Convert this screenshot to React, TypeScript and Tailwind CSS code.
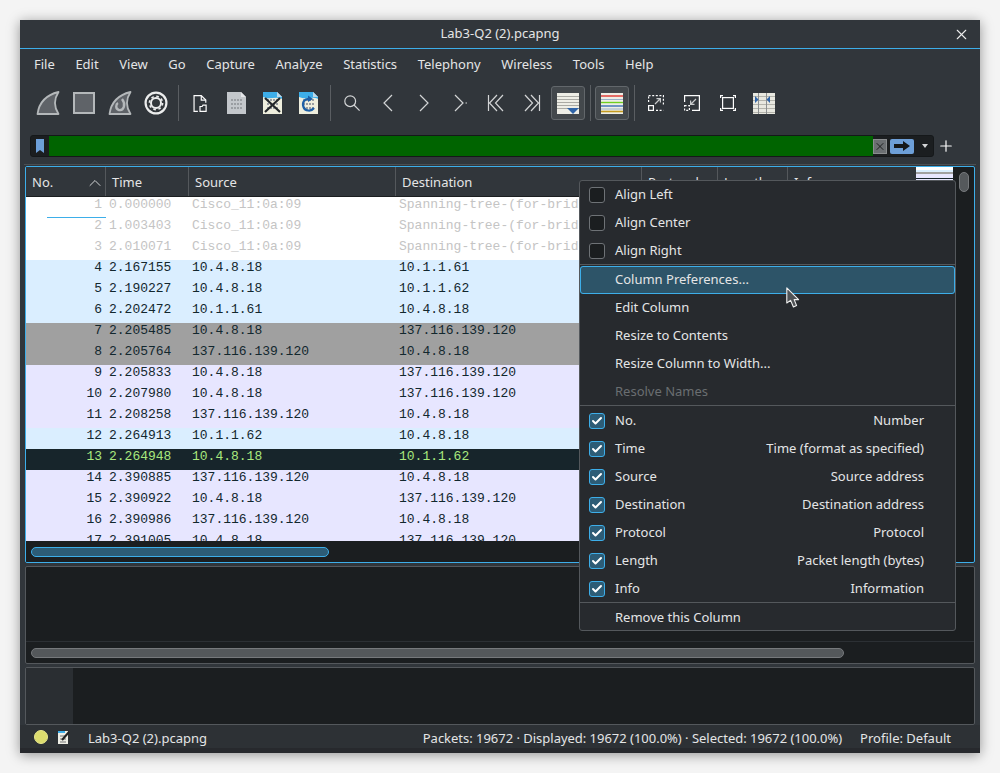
import { Check, ChevronUp, Plus, X } from 'lucide-react';

const menuNames = ['File', 'Edit', 'View', 'Go', 'Capture', 'Analyze', 'Statistics', 'Telephony', 'Wireless', 'Tools', 'Help'];

type Row = { no: number; time: string; src: string; dst: string; kind: 'stp' | 'blue' | 'gray' | 'lav' | 'sel' };

const stp = 'Spanning-tree-(for-bridges)_00';
const rows: Row[] = [
  { no: 1, time: '0.000000', src: 'Cisco_11:0a:09', dst: stp, kind: 'stp' },
  { no: 2, time: '1.003403', src: 'Cisco_11:0a:09', dst: stp, kind: 'stp' },
  { no: 3, time: '2.010071', src: 'Cisco_11:0a:09', dst: stp, kind: 'stp' },
  { no: 4, time: '2.167155', src: '10.4.8.18', dst: '10.1.1.61', kind: 'blue' },
  { no: 5, time: '2.190227', src: '10.4.8.18', dst: '10.1.1.62', kind: 'blue' },
  { no: 6, time: '2.202472', src: '10.1.1.61', dst: '10.4.8.18', kind: 'blue' },
  { no: 7, time: '2.205485', src: '10.4.8.18', dst: '137.116.139.120', kind: 'gray' },
  { no: 8, time: '2.205764', src: '137.116.139.120', dst: '10.4.8.18', kind: 'gray' },
  { no: 9, time: '2.205833', src: '10.4.8.18', dst: '137.116.139.120', kind: 'lav' },
  { no: 10, time: '2.207980', src: '10.4.8.18', dst: '137.116.139.120', kind: 'lav' },
  { no: 11, time: '2.208258', src: '137.116.139.120', dst: '10.4.8.18', kind: 'lav' },
  { no: 12, time: '2.264913', src: '10.1.1.62', dst: '10.4.8.18', kind: 'blue' },
  { no: 13, time: '2.264948', src: '10.4.8.18', dst: '10.1.1.62', kind: 'sel' },
  { no: 14, time: '2.390885', src: '137.116.139.120', dst: '10.4.8.18', kind: 'lav' },
  { no: 15, time: '2.390922', src: '10.4.8.18', dst: '137.116.139.120', kind: 'lav' },
  { no: 16, time: '2.390986', src: '137.116.139.120', dst: '10.4.8.18', kind: 'lav' },
  { no: 17, time: '2.391005', src: '10.4.8.18', dst: '137.116.139.120', kind: 'lav' },
];

const rowClass = {
  stp: 'bg-white text-[#c4c4c4]',
  blue: 'bg-[#daeeff] text-[#12272e]',
  gray: 'bg-[#a0a0a0] text-[#12272e]',
  lav: 'bg-[#e7e6ff] text-[#12272e]',
  sel: 'bg-[#17252b] text-[#a9e87e]',
};

const columnItems = [
  ['No.', 'Number'],
  ['Time', 'Time (format as specified)'],
  ['Source', 'Source address'],
  ['Destination', 'Destination address'],
  ['Protocol', 'Protocol'],
  ['Length', 'Packet length (bytes)'],
  ['Info', 'Information'],
];

const FinStart = () => (
  <svg width="24" height="24" viewBox="0 0 24 24">
    <path d="M1.5 23 C3 12 10 4 22.5 1 C18 8 18 16 22.5 23 Z" fill="#5f6368" stroke="#b4b8ba" strokeWidth="1.8" strokeLinejoin="round" />
  </svg>
);

const StopIcon = () => <div className="w-[22px] h-[22px] bg-[#5f6368] border-2 border-[#b4b8ba]" />;

const FinRestart = () => (
  <svg width="24" height="24" viewBox="0 0 24 24">
    <path d="M1.5 23 C3 12 10 4 22.5 1 C18 8 18 16 22.5 23 Z" fill="#5f6368" stroke="#b4b8ba" strokeWidth="1.8" strokeLinejoin="round" />
    <path d="M14 8 C18 13 16 20 11 19 C7 18 8 13 10 12" fill="none" stroke="#b4b8ba" strokeWidth="2.4" />
  </svg>
);

const GearIcon = () => (
  <svg width="24" height="24" viewBox="0 0 24 24">
    <circle cx="12" cy="12" r="10.4" fill="#33383c" stroke="#eceded" strokeWidth="2.2" />
    <circle cx="12" cy="12" r="5" fill="none" stroke="#eceded" strokeWidth="2" />
    <circle cx="12" cy="12" r="6.6" fill="none" stroke="#eceded" strokeWidth="1.6" strokeDasharray="2.6 2.6" />
  </svg>
);

const OpenIcon = () => (
  <svg width="14" height="17" viewBox="0 0 16 20" fill="none" stroke="#fcfcfc" strokeWidth="1.4">
    <path d="M5.5 19.2 H1 V.8 H9.5 L14.8 6 V9" />
    <path d="M9.5 .8 V6 H14.8" />
    <path d="M8 19.2 V13.5 H10.5 L11.5 12 H15.2 V19.2 Z" />
  </svg>
);

// little binary-file sheet, the three file icons share it
const FileSheet = ({ blue }: { blue?: boolean }) => (
  <>
    <path d="M1 1 H15 L20 6 V23 H1 Z" fill={blue ? '#eeeedd' : '#c3c7cb'} />
    {blue && <path d="M1 1 H15 L20 6 V8 C14 5 8 9 1 6 Z" fill="#3daee9" />}
    <path d="M15 1 V6 H20 Z" fill={blue ? '#bcd9ea' : '#e4e6e8'} />
    <path d="M5 9 H16 M5 13 H16 M5 17 H16" stroke="#9a9ea2" strokeWidth="2" strokeDasharray="2 1" fill="none" />
  </>
);

const FileIcon = () => (
  <svg width="21" height="24" viewBox="0 0 21 24">
    <FileSheet />
  </svg>
);

const CloseFileIcon = () => (
  <svg width="21" height="24" viewBox="0 0 21 24">
    <FileSheet blue />
    <path d="M3 7 L18 21 M18 7 L3 21" stroke="#23272a" strokeWidth="2.2" />
  </svg>
);

const ReloadFileIcon = () => (
  <svg width="21" height="24" viewBox="0 0 21 24">
    <FileSheet blue />
    <path d="M12 8 C6 7 4 12 5.5 16 C7 20 13 21 16 17" fill="none" stroke="#1d5fa6" strokeWidth="2.2" />
    <path d="M10 4.5 L15 8 L10 11 Z" fill="#1d5fa6" />
  </svg>
);

const LineIcon = ({ d }: { d: string }) => (
  <svg width="22" height="22" viewBox="0 0 22 22" fill="none" stroke="#d3d5d6" strokeWidth="1.2">
    <path d={d} />
  </svg>
);

const SearchIcon = () => (
  <svg width="16" height="16" viewBox="0 0 16 16" fill="none" stroke="#d3d5d6" strokeWidth="1.2">
    <circle cx="6.2" cy="6.2" r="5.4" />
    <path d="M10 10 L15.6 15.6" />
  </svg>
);

const AutoScrollIcon = () => (
  <svg width="22" height="21" viewBox="0 0 22 21">
    <rect width="22" height="21" fill="#eeeee6" />
    <path d="M0 3.5 H22 M0 6.5 H22 M0 9.5 H22 M0 12.5 H22 M0 15.5 H22" stroke="#aaaaa4" />
    <path d="M10 15 H22 L16 21 Z" fill="#2f64a8" />
  </svg>
);

const ColorizeIcon = () => (
  <svg width="22" height="21" viewBox="0 0 22 21">
    <rect width="22" height="21" fill="#eeeee6" />
    <path d="M0 3 H22" stroke="#e0342f" strokeWidth="1.4" />
    <path d="M0 6.5 H22" stroke="#9ab0c8" />
    <path d="M0 9.5 H22" stroke="#6fcf20" strokeWidth="1.4" />
    <path d="M0 13 H22" stroke="#3b6fb5" strokeWidth="1.4" />
    <path d="M0 16 H22" stroke="#9ab0c8" />
    <path d="M0 18.5 H22" stroke="#c49a1f" strokeWidth="1.6" />
  </svg>
);

const ZoomInIcon = () => (
  <svg width="16" height="16" viewBox="0 0 16 16" fill="none" stroke="#fcfcfc" strokeWidth="1.2">
    <path d="M.6 7 V1 M.6 .6 H15.4 V11" strokeDasharray="2 1.6" />
    <rect x=".6" y="10.6" width="4.8" height="4.8" />
    <path d="M7 9 L12 4 M8.5 3.6 H12.4 V7.5" stroke="#c9cbcc" />
    <path d="M8 15.4 H15.4" strokeDasharray="2 1.6" />
  </svg>
);

const ZoomOutIcon = () => (
  <svg width="16" height="16" viewBox="0 0 16 16" fill="none" stroke="#fcfcfc" strokeWidth="1.2">
    <path d="M.6 7 V.6 H15.4 V15.4 H8" />
    <path d="M.6 10.6 H5.4 V15.4 H.6 Z" strokeDasharray="2 1.6" />
    <path d="M12 4 L7 9 M10.5 9.4 H6.6 V5.5" stroke="#c9cbcc" />
  </svg>
);

const NormalSizeIcon = () => (
  <svg width="16" height="16" viewBox="0 0 16 16" fill="none" stroke="#fcfcfc" strokeWidth="1.2">
    <rect x="2.6" y="2.6" width="10.8" height="10.8" />
    <path d="M.6 3 V.6 H3 M13 .6 H15.4 V3 M15.4 13 V15.4 H13 M3 15.4 H.6 V13" />
  </svg>
);

const ResizeColsIcon = () => (
  <svg width="22" height="21" viewBox="0 0 22 21">
    <rect width="22" height="21" fill="#e8e8e0" />
    <path d="M0 3.5 H22 M0 7.5 H22 M0 11.5 H22 M0 15.5 H22 M0 19.5 H22" stroke="#b4b4ac" />
    <path d="M5.5 0 V21 M13.5 0 V21" stroke="#8c8f90" />
    <path d="M2 3 L5.5 6.5 L2 10 Z M17 3 L13.5 6.5 L17 10 Z" fill="#2f64a8" />
  </svg>
);

const Sep = () => <div className="w-px h-9 bg-[#5a5e62] ml-[5px] mr-[4px]" />;

const Tool = ({ children, on }: { children: React.ReactNode; on?: boolean }) => (
  <div className={`w-[34px] h-[34px] shrink-0 flex items-center justify-center ${on ? 'bg-[#43484c] border border-[#62676b] rounded-[3px]' : ''}`}>
    {children}
  </div>
);

const Box = ({ checked }: { checked?: boolean }) =>
  checked ? (
    <div className="w-4 h-4 rounded-[3px] border border-[#3daee9] bg-[#2d5c76] flex items-center justify-center">
      <Check size={12} strokeWidth={4} className="text-white" />
    </div>
  ) : (
    <div className="w-4 h-4 rounded-[3px] border border-[#6e7276] bg-[#1b1e20]" />
  );

const MenuRow = ({ left, right, box, dim, active }: { left: string; right?: string; box?: 'on' | 'off'; dim?: boolean; active?: boolean }) => (
  <div className={`h-7 flex items-center rounded-[3px] ${active ? 'bg-[#2d5468] outline outline-1 -outline-offset-1 outline-[#3daee9]' : ''} ${dim ? 'text-[#6a6e71]' : 'text-[#e4e5e6]'}`}>
    <div className="w-[35px] pl-[9px] flex items-center shrink-0">{box && <Box checked={box === 'on'} />}</div>
    <span className="flex-1">{left}</span>
    {right && <span className="pr-[31px]">{right}</span>}
  </div>
);

const MenuSep = () => <div className="h-px -mt-px mb-px bg-[#54585c]" />;

const ContextMenu = () => (
  <div className="absolute left-[579px] top-[180px] w-[377px] h-[451px] bg-[#272a2e] border border-[#54585c] rounded-[3px] text-[13px]">
    <MenuRow left="Align Left" box="off" />
    <MenuRow left="Align Center" box="off" />
    <MenuRow left="Align Right" box="off" />
    <MenuSep />
    <MenuRow left="Column Preferences..." active />
    <MenuRow left="Edit Column" />
    <MenuRow left="Resize to Contents" />
    <MenuRow left="Resize Column to Width..." />
    <MenuRow left="Resolve Names" dim />
    <MenuSep />
    {columnItems.map(([name, desc]) => (
      <MenuRow key={name} left={name} right={desc} box="on" />
    ))}
    <MenuSep />
    <MenuRow left="Remove this Column" />
  </div>
);

const Cursor = () => (
  <svg className="absolute left-[786px] top-[287px]" width="14" height="21" viewBox="0 0 14 21">
    <path d="M.8 .8 V16 L4.6 13.4 L7.4 20 L10.6 18.6 L8.2 12.6 H12.6 Z" fill="#505356" stroke="#f0f0f0" strokeWidth="1.1" strokeLinejoin="round" />
  </svg>
);

const HeadCell = ({ w, label, children }: { w: string; label: string; children?: React.ReactNode }) => (
  <div className={`${w} h-full shrink-0 flex items-center justify-between pl-[6px] pt-[2px] border-r border-[#54585c]`}>
    <span>{label}</span>
    {children}
  </div>
);

export default function App() {
  return (
    <div className="w-[1000px] h-[773px] bg-[#f4f4f4] p-5 relative font-['Noto_Sans',sans-serif] text-[13px] text-[#e4e5e6] overflow-hidden">
      <div className="w-[960px] h-[733px] bg-[#31363b] shadow-[0_2px_12px_rgba(0,0,0,0.4)] flex flex-col">
        {/* title bar */}
        <div className="h-[29px] shrink-0 border-b border-[#3daee9] flex items-center justify-center relative">
          <span>Lab3-Q2 (2).pcapng</span>
          <X size={17} strokeWidth={1.5} className="absolute right-[10px] top-[6px] text-[#eceded]" />
        </div>

        {/* menu bar */}
        <div className="h-[29px] shrink-0 flex items-center pl-[14px] pt-[2px] gap-[20.6px]">
          {menuNames.map((m) => (
            <span key={m}>{m}</span>
          ))}
        </div>

        {/* main toolbar */}
        <div className="h-[50px] shrink-0 flex items-center pl-[11px]">
          <div className="flex items-center gap-[2px]">
            <Tool><FinStart /></Tool>
            <Tool><StopIcon /></Tool>
            <Tool><FinRestart /></Tool>
            <Tool><GearIcon /></Tool>
          </div>
          <Sep />
          <div className="flex items-center gap-[2px]">
            <Tool><OpenIcon /></Tool>
            <Tool><FileIcon /></Tool>
            <Tool><CloseFileIcon /></Tool>
            <Tool><ReloadFileIcon /></Tool>
          </div>
          <Sep />
          <div className="flex items-center gap-[2px]">
            <Tool><SearchIcon /></Tool>
            <Tool><LineIcon d="M15 3 L7 11 L15 19" /></Tool>
            <Tool><LineIcon d="M7 3 L15 11 L7 19" /></Tool>
            <Tool><LineIcon d="M6 3 L14 11 L6 19 M16.5 11 H18" /></Tool>
            <Tool><LineIcon d="M3.5 3 V19 M12 3 L4.5 11 L12 19 M18 3 L10.5 11 L18 19" /></Tool>
            <Tool><LineIcon d="M18.5 3 V19 M10 3 L17.5 11 L10 19 M4 3 L11.5 11 L4 19" /></Tool>
            <Tool on><AutoScrollIcon /></Tool>
          </div>
          <Sep />
          <Tool on><ColorizeIcon /></Tool>
          <Sep />
          <div className="flex items-center gap-[2px]">
            <Tool><ZoomInIcon /></Tool>
            <Tool><ZoomOutIcon /></Tool>
            <Tool><NormalSizeIcon /></Tool>
            <Tool><ResizeColsIcon /></Tool>
          </div>
        </div>

        {/* display filter */}
        <div className="h-[36px] shrink-0 flex items-center pl-[10px]">
          <div className="w-[904px] h-[22px] bg-[#1b1e20] border border-[#15181a] rounded-[3px] flex items-center overflow-hidden">
            <div className="w-[18px] h-full flex items-center justify-center shrink-0">
              <svg width="8" height="14" viewBox="0 0 8 14">
                <path d="M0 0 H8 V14 L4 11 L0 14 Z" fill="#6d9fd8" />
              </svg>
            </div>
            <div className="flex-1 h-full bg-[#006400]" />
            <div className="w-[14px] h-[15px] bg-[#6b6f72] border border-[#8a8d8f] flex items-center justify-center shrink-0">
              <X size={13} strokeWidth={2} className="text-[#1b1e20]" />
            </div>
            <div className="w-[24px] h-[15px] ml-[3px] bg-[#6d9fd8] rounded-[2px] flex items-center justify-center shrink-0">
              <svg width="16" height="10" viewBox="0 0 16 10">
                <path d="M0 3 H9 V0 L16 5 L9 10 V7 H0 Z" fill="#15181a" />
              </svg>
            </div>
            <div className="w-[19px] pl-[3px] flex justify-center shrink-0">
              <div className="w-0 h-0 border-x-[3.5px] border-x-transparent border-t-[4px] border-t-[#d3d5d6]" />
            </div>
          </div>
          <Plus size={18} strokeWidth={1.6} className="ml-[3px] text-[#fcfcfc]" />
        </div>
        <div className="h-px shrink-0 mx-1 bg-[#4a4f53]" />

        {/* panes */}
        <div className="flex-1 min-h-0 flex flex-col px-[5px] gap-[3px] mt-[1px]">
          {/* packet list */}
          <div className="h-[397px] shrink-0 border border-[#3daee9] rounded-[2px] bg-[#1b1e20] flex overflow-hidden">
            <div className="flex-1 min-w-0 flex flex-col">
              <div className="h-[30px] shrink-0 bg-[#31363b] flex items-center border-b border-[#1b1e20]">
                <HeadCell w="w-[80px]" label="No.">
                  <ChevronUp size={20} strokeWidth={1.2} className="text-[#d3d5d6]" />
                </HeadCell>
                <HeadCell w="w-[83px]" label="Time" />
                <HeadCell w="w-[207px]" label="Source" />
                <HeadCell w="w-[246px]" label="Destination" />
                <HeadCell w="w-[76px]" label="Protocol" />
                <HeadCell w="w-[70px]" label="Length" />
                <div className="flex-1 h-full relative pl-[6px] pt-[2px] flex items-center">
                  <span>Info</span>
                  <div className="absolute right-0 top-0 w-[37px] h-[14px] flex flex-col">
                    <div className="h-[3px] bg-white" />
                    <div className="h-[2px] bg-[#daeeff]" />
                    <div className="h-[2px] bg-[#a0a0a0]" />
                    <div className="h-[4px] bg-[#e7e6ff]" />
                    <div className="h-[1px] bg-[#17252b]" />
                    <div className="h-[2px] bg-[#e7e6ff]" />
                  </div>
                </div>
              </div>
              <div className="flex-1 min-h-0 overflow-hidden relative font-['Liberation_Mono',monospace]">
                {rows.map((r) => (
                  <div key={r.no} className={`h-[21px] leading-[15px] flex ${rowClass[r.kind]}`}>
                    <span className="w-[76px] text-right shrink-0">{r.no}</span>
                    <span className="w-[86px] pl-[7px] shrink-0">{r.time}</span>
                    <span className="w-[207px] pl-[4px] shrink-0">{r.src}</span>
                    <span className="pl-[4px] whitespace-nowrap">{r.dst}</span>
                  </div>
                ))}
                <div className="absolute left-[21px] top-[20px] w-[59px] h-px bg-[#3daee9]" />
              </div>
              <div className="h-[21px] shrink-0 bg-[#1b1e20] flex items-center px-[5px]">
                <div className="w-[298px] h-[10px] rounded-full bg-[#2d5c76] border border-[#3daee9]" />
              </div>
            </div>
            <div className="w-[21px] shrink-0 pt-[5px] flex justify-center">
              <div className="w-[10px] h-[20px] rounded-full bg-[#55595c] border border-[#76797c]" />
            </div>
          </div>

          {/* packet details */}
          <div className="h-[98px] shrink-0 border border-[#54585c] rounded-[2px] bg-[#1b1e20] flex flex-col">
            <div className="flex-1 border-b border-[#2c3034]" />
            <div className="h-[21px] flex items-center px-[5px]">
              <div className="w-[813px] h-[10px] rounded-full bg-[#54585b] border border-[#76797c]" />
            </div>
          </div>

          {/* packet bytes */}
          <div className="h-[58px] shrink-0 border border-[#54585c] rounded-[2px] bg-[#1b1e20] flex">
            <div className="w-[47px] bg-[#2a2e32]" />
          </div>

          {/* status bar */}
          <div className="flex-1 -mx-[5px] -mt-[3px] bg-[#27292d] flex flex-col">
            <div className="h-[23px] bg-[#2d3135] flex items-center pl-[14px] pr-[29px] pt-[3px]">
              <div className="w-[14px] h-[14px] -mt-[2px] rounded-full bg-[#dcdc6e] border border-[#e8e88c]" />
              <svg className="ml-[9px] -mt-[2px]" width="14" height="14" viewBox="0 0 14 14">
                <path d="M1 1 H11 V14 H1 Z" fill="#eeeee6" />
                <path d="M1 1 H8 V3 H1 Z" fill="#3daee9" />
                <path d="M3 6 H9 M3 9 H9 M3 12 H9" stroke="#777" />
                <path d="M5 10 L12 2" stroke="#222" strokeWidth="2" />
              </svg>
              <span className="ml-[17px] pt-[2px]">Lab3-Q2 (2).pcapng</span>
              <span className="ml-auto pt-[2px] tracking-[-0.02px]">Packets: 19672 · Displayed: 19672 (100.0%) · Selected: 19672 (100.0%)</span>
              <span className="ml-[18px] pt-[2px]">Profile: Default</span>
            </div>
          </div>
        </div>
      </div>

      <ContextMenu />
      <Cursor />
    </div>
  );
}
